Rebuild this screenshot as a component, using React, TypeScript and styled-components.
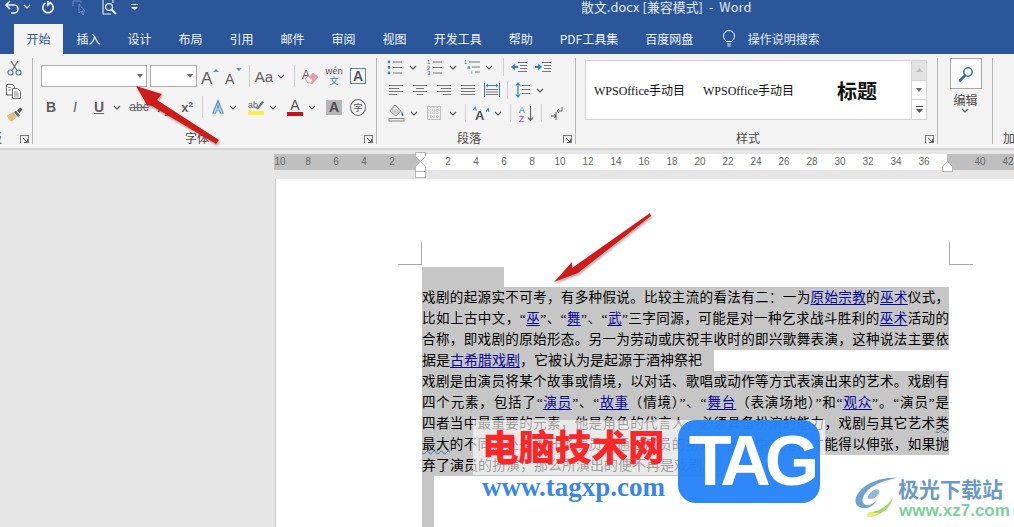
import React from "react";
import styled, { createGlobalStyle } from "styled-components";

const Global = createGlobalStyle`
  html, body { margin: 0; padding: 0; overflow: hidden; background: #e6e6e6; }
  body { font-family: "Noto Sans CJK SC", "Liberation Sans", sans-serif; }
`;

const Screen = styled.div`
  position: relative; width: 1014px; height: 527px; overflow: hidden; background: #e6e6e6;
`;
const TitleBar = styled.div`
  display: flex; height: 24px; background: #2b579a; overflow: hidden;
`;
const QuickBar = styled.div`
  width: 581px; display: flex; align-items: flex-start; padding-left: 4px; box-sizing: border-box; flex: none;
`;
const QuickIcon = styled.svg<{ $ml?: number; $mt?: number }>`
  flex: none; margin-left: ${p => p.$ml ?? 0}px; margin-top: ${p => p.$mt ?? 0}px; display: block;
`;
const Title = styled.div`
  color: #e4eaf4; font-size: 12.8px; line-height: 14px; white-space: pre; letter-spacing: 0.1px;
`;
const TabBar = styled.div`
  display: flex; height: 30px; background: #2b579a; padding-left: 14px; align-items: stretch;
`;
const Tab = styled.div<{ $active?: boolean }>`
  padding: 0 ${p => (p.$active ? 12.5 : 13.5)}px; font-size: 12px; line-height: 29px;
  color: ${p => (p.$active ? "#2b579a" : "#f1f4f9")};
  background: ${p => (p.$active ? "#f3f3f3" : "transparent")};
  white-space: nowrap;
`;
const SearchTab = styled.div`
  font-size: 12px; line-height: 29px; color: #e4eaf4; white-space: nowrap;
`;
const Bulb = styled.svg`
  margin: 6px 12px 0 15px; flex: none;
`;
const Ribbon = styled.div`
  display: flex; height: 96px; box-sizing: border-box; padding-top: 4px; background: #f3f3f3;
  border-bottom: 2px solid #d4d4d4; overflow: hidden;
`;
const Group = styled.div<{ $w: number; $noBorder?: boolean }>`
  width: ${p => p.$w}px; height: 86px; box-sizing: border-box; flex: none;
  display: flex; flex-direction: column;
  border-right: ${p => (p.$noBorder ? "none" : "1px solid #b5b5b5")};
`;
const Rows = styled.div<{ $pt?: number; $gap: number }>`
  display: flex; flex-direction: column; gap: ${p => p.$gap}px; padding-top: ${p => p.$pt ?? 0}px; flex: 1;
`;
const Row = styled.div<{ $h: number }>`
  display: flex; align-items: center; height: ${p => p.$h}px;
`;
const Cell = styled.div<{ $w: number; $ml?: number }>`
  width: ${p => p.$w}px; margin-left: ${p => p.$ml ?? 0}px; flex: none; height: 100%;
  display: flex; align-items: center; justify-content: center; color: #5f5f5f; position: relative;
`;
const Sep = styled.div<{ $ml: number }>`
  width: 1px; height: 100%; margin-left: ${p => p.$ml}px; background: #cfcfcf; flex: none;
`;
const Combo = styled.div<{ $w: number; $ml?: number }>`
  width: ${p => p.$w}px; margin-left: ${p => p.$ml ?? 0}px; height: 22px; box-sizing: border-box; flex: none;
  border: 1px solid #ababab; background: #fff; display: flex; align-items: center; justify-content: flex-end; padding-right: 3px;
`;
const Glyph = styled.span<{ $size?: number; $weight?: number; $color?: string; $italic?: boolean; $under?: boolean; $strike?: boolean }>`
  font-family: "Liberation Sans", sans-serif;
  font-size: ${p => p.$size ?? 14}px; font-weight: ${p => p.$weight ?? 400};
  color: ${p => p.$color ?? "#5f5f5f"}; font-style: ${p => (p.$italic ? "italic" : "normal")};
  text-decoration: ${p => (p.$under ? "underline" : p.$strike ? "line-through" : "none")};
  line-height: 1; white-space: nowrap;
  sub, sup { font-size: 8px; color: #5f5f5f; line-height: 0; }
`;
const BoxedA = styled.span`
  width: 14px; height: 14px; border: 1px solid #5c87a8; display: flex; align-items: center; justify-content: center;
  font: 700 14px "Liberation Sans", sans-serif; color: #555; background: #fdfdfd;
`;
const GreyA = styled.span`
  width: 16px; height: 15px; background: #b5b5b5; display: flex; align-items: center; justify-content: center;
  font: 700 14px "Liberation Sans", sans-serif; color: #4d4d4d;
`;
const CircleChar = styled.span`
  width: 15px; height: 15px; border: 1px solid #666; border-radius: 50%; display: flex; align-items: center; justify-content: center;
  font-size: 9px; color: #555;
`;
const ColorBar = styled.div`
  display: flex; flex-direction: column; align-items: center; line-height: 1;
`;
const Swatch = styled.div<{ $c: string }>`
  width: 16px; height: 4px; background: ${p => p.$c}; margin-top: 0;
`;
const Wen = styled.div`
  display: flex; flex-direction: column; align-items: center; line-height: 10px; font-size: 9px; color: #555;
  b { font-weight: 400; color: #2b7cb8; }
`;
const LabelRow = styled.div`
  display: flex; height: 14px; align-items: center;
`;
const Label = styled.div<{ $ml: number }>`
  margin-left: ${p => p.$ml}px; margin-top: 2px; font-size: 12px; line-height: 14px; color: #4a4a4a; white-space: nowrap;
`;
const Launcher = styled.svg`
  margin-left: auto; margin-right: 3px; flex: none; margin-top: 5px;
`;
const Gallery = styled.div`
  margin: 2px 0 0 9px; width: 342px; height: 60px; box-sizing: border-box; border: 1px solid #d2d2d2; background: #fff;
  display: flex;
`;
const StyleItem = styled.div<{ $w: number; $pl: number }>`
  width: ${p => p.$w}px; padding-left: ${p => p.$pl}px; box-sizing: border-box; flex: none; display: flex; align-items: center;
  font: 12px "Liberation Serif", "Noto Sans CJK SC", serif; color: #111; white-space: nowrap; overflow: hidden;
`;
const BigStyle = styled.span`
  font: 700 20px "Noto Sans CJK SC", serif; color: #111;
`;
const Scroller = styled.div`
  margin-left: auto; width: 15px; display: flex; flex-direction: column; border-left: 1px solid #d2d2d2;
`;
const ScrollBtn = styled.div<{ $top?: boolean }>`
  flex: 1; display: flex; align-items: center; justify-content: center;
  background: ${p => (p.$top ? "#e3e3e3" : "#fff")}; border-bottom: 1px solid #d2d2d2;
  &:last-child { border-bottom: 0; }
`;
const EditCol = styled.div`
  display: flex; flex-direction: column; align-items: center; flex: 1;
`;
const EditBtn = styled.div`
  width: 32px; height: 31px; box-sizing: border-box; border: 1px solid #a8a8a8; background: #fbfbfb;
  display: flex; align-items: center; justify-content: center; margin-left: 1px;
`;
const EditText = styled.div`
  font-size: 12px; line-height: 16px; color: #4a4a4a; margin-top: 3px; margin-left: 1px;
`;
const Stack = styled.div`
  display: flex; flex-direction: column; align-items: center; width: 28px; gap: 5px; padding-top: 1px;
`;
const ClipIcon = styled.div`
  height: 18px; display: flex; align-items: center; justify-content: center;
`;
const Work = styled.div`
  height: 377px; overflow: hidden;
`;
const Ruler = styled.div`
  margin: 4px 0 0 274px; height: 16px; display: flex; overflow: hidden; position: relative;
  background: linear-gradient(to right, #bfbfbf 146px, #fff 146px, #fff 673px, #bfbfbf 673px);
`;
const Ticks = styled.div`
  display: flex; margin-left: -8px;
`;
const Tick = styled.span`
  width: 28px; flex: none; text-align: center; font: 10px/16px "Liberation Sans", sans-serif; color: #666;
`;
const Marker = styled.svg<{ $x: number }>`
  position: absolute; left: ${p => p.$x}px; top: 150px;
`;
const Page = styled.div`
  position: relative; margin: 9px 0 0 275px; width: 820px; height: 360px; box-sizing: border-box;
  background: #fff; border-left: 1px solid #cfcfcf; padding: 88px 0 0 146px;
`;
const Crop = styled.div<{ $x: number; $right?: boolean }>`
  position: absolute; left: ${p => p.$x}px; top: 63px; width: 24px; height: 23px; box-sizing: border-box;
  border-bottom: 1px solid #a8a8a8;
  ${p => (p.$right ? "border-left: 1px solid #a8a8a8;" : "border-right: 1px solid #a8a8a8;")}
`;
const Selected = styled.div`
  width: 82px; height: 20px; background: #c6c6c6;
`;
const Line = styled.div<{ $w?: number }>`
  width: ${p => p.$w ?? 527}px; height: 21px; background: #c6c6c6; overflow: hidden; color: #000;
  font: ${p => (p.$w ? 14 : 13.5)}px/21px "Liberation Serif", "Noto Sans CJK SC", sans-serif; white-space: nowrap;
  ${p => (p.$w ? "" : "text-align: justify; text-align-last: justify; white-space: normal;")}
`;
const Strip = styled.div`
  width: 12px; height: 60px; background: #c6c6c6;
`;
const Link = styled.a`
  color: #06069c; text-decoration: underline; text-underline-offset: 2px;
`;
const Squiggle = styled.span`
  text-decoration: underline wavy #3a5fb0 1px;
`;
const Veil = styled.div`
  position: absolute; left: 473px; top: 420px; width: 352px; height: 55px; background: rgba(255, 255, 255, 0.62);
`;
const WmTitle = styled.div`
  position: absolute; left: 482px; top: 420px; font-size: 36.5px; line-height: 52px; font-weight: 900; color: #f9262a; white-space: nowrap;
`;
const WmUrl = styled.div`
  position: absolute; left: 482px; top: 471px; font: 700 27px/32px "Liberation Serif", serif; color: #3a86e8; white-space: nowrap;
`;
const TagBox = styled.div`
  position: absolute; left: 678px; top: 420px; width: 142px; height: 83px; box-sizing: border-box; padding-left: 4px; border-radius: 18px;
  background: rgba(31, 127, 246, 0.93); display: flex; align-items: center; justify-content: center;
  font: 700 70px/83px "Liberation Sans", sans-serif; color: #fff; letter-spacing: -6px;
`;
const LogoMark = styled.svg`
  position: absolute; left: 853px; top: 476px;
`;
const LogoName = styled.div`
  position: absolute; left: 898px; top: 474px; font-size: 21px; line-height: 28px; font-weight: 700; color: #6c9ac6; white-space: nowrap;
`;
const LogoUrl = styled.div`
  position: absolute; left: 899px; top: 501px; font: 700 17px/20px "Liberation Sans", sans-serif; color: #7ccf9e; white-space: nowrap;
`;
const ArrowLayer = styled.svg`
  position: absolute; left: 0; top: 0;
`;

const Caret = ({ c = "#555" }: { c?: string }) => (
  <svg width="8" height="5" viewBox="0 0 8 5"><path d="M1 1l3 3 3-3" fill="none" stroke={c} strokeWidth="1.2" /></svg>
);
const DownTri = () => (
  <svg width="6" height="4" viewBox="0 0 6 4"><path d="M0 0h6L3 4z" fill="#666" /></svg>
);
const Launch = () => (
  <Launcher width="9" height="9" viewBox="0 0 9 9">
    <path d="M.5 8V.5H8.500V8" fill="none" stroke="#777" /><path d="M3 3l4 4M7.500 4v3.500H4" fill="none" stroke="#555" />
  </Launcher>
);
const Grow = ({ up }: { up?: boolean }) => (
  <svg width="20" height="18" viewBox="0 0 20 18">
    <text x="1" y="17" fontFamily="Liberation Sans" fontSize={up ? 17 : 14} fill="#5f5f5f">A</text>
    <path d={up ? "M13 5l3-3 3 3z" : "M12 1h6l-3 3z"} fill="#5b93c8" />
  </svg>
);
const Lines = ({ kind }: { kind: "left" | "center" | "right" | "just" }) => {
  const rows = [1.5, 4.5, 7.5, 10.5];
  const spans: Record<string, [number, number][]> = {
    left: [[1, 15], [1, 11], [1, 15], [1, 9]],
    center: [[1, 15], [4, 12], [1, 15], [5, 11]],
    right: [[1, 15], [5, 15], [1, 15], [7, 15]],
    just: [[1, 15], [1, 15], [1, 15], [1, 15]],
  };
  return (
    <svg width="16" height="12" viewBox="0 0 16 12">
      {rows.map((y, i) => <path key={y} d={`M${spans[kind][i][0]} ${y}H${spans[kind][i][1]}`} stroke="#777" />)}
    </svg>
  );
};
const Bullets = () => (
  <svg width="16" height="15" viewBox="0 0 16 15">
    {[2, 7.5, 13].map(y => <React.Fragment key={y}><circle cx="2" cy={y} r="1.4" fill="#4a7fb0" /><path d={`M6 ${y}H15`} stroke="#777" /></React.Fragment>)}
  </svg>
);
const Numbers = () => (
  <svg width="16" height="16" viewBox="0 0 16 16">
    {["1", "2", "3"].map((n, i) => <React.Fragment key={n}><text x="0" y={5 + i * 5.5} fontSize="6" fontFamily="Liberation Sans" fill="#3b6f9e">{n}</text><path d={`M6 ${3 + i * 5.5}H15`} stroke="#777" /></React.Fragment>)}
  </svg>
);
const Multi = () => (
  <svg width="18" height="16" viewBox="0 0 18 16">
    <text x="0" y="5" fontSize="5.5" fontFamily="Liberation Sans" fill="#3b6f9e">1</text><path d="M5 3H16" stroke="#777" />
    <text x="3" y="10" fontSize="5.5" fontFamily="Liberation Sans" fill="#3b6f9e">a</text><path d="M8 8H16" stroke="#777" />
    <text x="7" y="15" fontSize="5.5" fontFamily="Liberation Sans" fill="#777">i</text><path d="M11 13H16" stroke="#777" />
  </svg>
);
const Indent = ({ out }: { out?: boolean }) => (
  <svg width="17" height="13" viewBox="0 0 17 13">
    <path d="M7 1.500H16M9 4.500H16M9 7.500H16M7 10.500H16" stroke="#777" />
    {out ? <path d="M0 6l4-3.500V5h3v2H4v2.500z" fill="#2f7fc4" /> : <path d="M7 6L3 2.500V5H0v2h3v2.500z" fill="#2f7fc4" />}
  </svg>
);
const Distribute = () => (
  <svg width="16" height="16" viewBox="0 0 16 16">
    <path d="M.5 1v14M15.500 1v14" stroke="#2f7fc4" /><path d="M2 3.500h12M4 2l-2 1.500L4 5M12 2l2 1.500L12 5" fill="none" stroke="#2f7fc4" />
    <path d="M2 7.500H14M2 10H14M2 12.500H14" stroke="#777" />
  </svg>
);
const Spacing = () => (
  <svg width="16" height="16" viewBox="0 0 16 16">
    <path d="M3 1v14M1 3.500L3 1l2 2.500M1 12.500L3 15l2-2.500" fill="none" stroke="#2f7fc4" strokeWidth="1.2" />
    <path d="M7 3.500H15M7 7.500H15M7 11.500H15" stroke="#777" />
  </svg>
);
const Shade = () => (
  <svg width="17" height="18" viewBox="0 0 17 18">
    <path d="M7 1l6 6-5 5-6-5z" fill="#fbfbfb" stroke="#666" />
    <path d="M13 7c2 2 3 4 2.200 5-1 1-2-1-2.200-5z" fill="#2f7fc4" />
    <path d="M4 5h7l2 2-5 5-6-5z" fill="#cfcfcf" />
    <rect x="1" y="14.500" width="15" height="2.500" fill="#efefef" stroke="#888" />
  </svg>
);
const Borders = () => (
  <svg width="14" height="14" viewBox="0 0 14 14">
    <rect x=".5" y=".5" width="13" height="13" fill="none" stroke="#8a8a8a" strokeDasharray="1 1" />
    <path d="M7 1v12M1 7h12M3.800 1v12M10.200 1v12M1 3.800h12M1 10.200h12" stroke="#bdbdbd" strokeDasharray="1 1" />
  </svg>
);
const TextDir = () => (
  <svg width="18" height="14" viewBox="0 0 18 14">
    <text x="3" y="13.500" fontFamily="Liberation Sans" fontWeight="700" fontSize="13" fill="#555">A</text>
    <path d="M1 5l2-3 1.500 3M14 5l2-3 1 3" fill="none" stroke="#2f7fc4" strokeWidth="1.2" transform="rotate(6 9 4)" />
  </svg>
);
const Sort = () => (
  <svg width="16" height="17" viewBox="0 0 16 17">
    <text x="0" y="8" fontFamily="Liberation Sans" fontSize="8.5" fill="#2f7fc4">A</text>
    <text x="0" y="16.500" fontFamily="Liberation Sans" fontSize="8.5" fill="#8a4fa8">Z</text>
    <path d="M11.500 1v14M9 12.500l2.500 3 2.500-3" fill="none" stroke="#666" strokeWidth="1.2" />
  </svg>
);
const Pilcrow = () => (
  <svg width="12" height="14" viewBox="0 0 12 14">
    <path d="M11 1v4H6M8 3L6 5l2 2" fill="none" stroke="#666" />
    <path d="M0 10h5M3 8l2 2-2 2M5 6v8" fill="none" stroke="#555" />
  </svg>
);
const Scissors = () => (
  <svg width="15" height="16" viewBox="0 0 15 16">
    <circle cx="3.500" cy="12.500" r="2.500" fill="none" stroke="#5b7f9c" strokeWidth="1.2" />
    <circle cx="11.500" cy="12.500" r="2.500" fill="none" stroke="#5b7f9c" strokeWidth="1.2" />
    <path d="M5 10.500L11 1M10 10.500L4 1" stroke="#666" strokeWidth="1.2" />
  </svg>
);
const CopyIcon = () => (
  <svg width="16" height="15" viewBox="0 0 16 15">
    <path d="M.5.5h6l2 2V11H.5z" fill="#fff" stroke="#666" />
    <path d="M6.500 4.500h5l3 3v7h-8z" fill="#fff" stroke="#666" />
    <path d="M2 3.500h3M2 6h3M8 8h4M8 10h5M8 12h5" stroke="#888" />
  </svg>
);
const Brush = () => (
  <svg width="17" height="15" viewBox="0 0 17 15">
    <path d="M1 8.500L7.500 5l3.500 5-5 4.500c-2 0-4-3-5-6z" fill="#e0bd80" />
    <path d="M8 5l4 5 2-1.500-4-5z" fill="#6a6a6a" />
    <path d="M11 3.500L14.500 0.500 16.500 2.500 13.500 6z" fill="#555" />
  </svg>
);
const Eraser = () => (
  <svg width="17" height="17" viewBox="0 0 17 17">
    <text x="0" y="11" fontFamily="Liberation Sans" fontSize="12" fill="#5f5f5f">A</text>
    <path d="M5 12l6-7 5 4-6 7z" fill="#ef9aa6" stroke="#d97c8a" strokeWidth=".5" />
    <path d="M3 11l3-3 5 4-2 3H6z" fill="#f3f3f3" stroke="#ef9aa6" />
  </svg>
);
const Lens = () => (
  <svg width="16" height="16" viewBox="0 0 16 16">
    <circle cx="10" cy="6" r="4.200" fill="none" stroke="#2f7fb5" strokeWidth="1.6" />
    <path d="M7 9.500L2 14.500" stroke="#2f6f9f" strokeWidth="2.600" strokeLinecap="round" />
  </svg>
);
const AccentA = () => (
  <svg width="16" height="16" viewBox="0 0 16 16">
    <path d="M8 1.500L3 14h2.500l1-3h3l1 3H13zM7.200 9L8 6l.8 3z" fill="#f4f8fc" stroke="#4a90cf" strokeWidth="1.2" />
  </svg>
);
const HighlightPen = () => (
  <svg width="16" height="11" viewBox="0 0 16 11">
    <text x="0" y="8" fontFamily="Liberation Sans" fontSize="9" fill="#5f5f5f">ab</text>
    <path d="M8 9l6-8 2 1.500-6 7z" fill="#777" />
  </svg>
);

const ticks = ["10", "8", "6", "4", "2", "", "2", "4", "6", "8", "10", "12", "14", "16", "18", "20", "22", "24", "26", "28", "30", "32", "34", "36", "", "40", "42"];

export default function App() {
  return (
    <Screen>
      <Global />
      <TitleBar>
        <QuickBar>
          <QuickIcon width="16" height="14" viewBox="0 0 16 14">
            <path d="M6 1L2 5l4 4M2 5h8a4 4 0 0 1 0 8H7" fill="none" stroke="#eef2f8" strokeWidth="1.6" />
          </QuickIcon>
          <QuickIcon $ml={3} $mt={4} width="8" height="5" viewBox="0 0 8 5"><path d="M1 1l3 3 3-3" fill="none" stroke="#e4eaf4" strokeWidth="1.2" /></QuickIcon>
          <QuickIcon $ml={10} width="14" height="14" viewBox="0 0 14 14">
            <path d="M7 1v4l3-3M4.500 3a5.200 5.200 0 1 0 5 0" fill="none" stroke="#eef2f8" strokeWidth="1.7" />
          </QuickIcon>
          <QuickIcon $ml={17} width="16" height="16" viewBox="0 0 16 16">
            <path d="M1 6V1h8v2M7 4v9l2-2 2 4 1-1-2-3h3z" fill="none" stroke="#6f8dbb" />
          </QuickIcon>
          <QuickIcon $ml={14} width="16" height="16" viewBox="0 0 16 16">
            <path d="M1 0v14h8M11 0v3" fill="none" stroke="#eef2f8" strokeWidth="1.1" />
            <circle cx="7" cy="7" r="3.400" fill="none" stroke="#eef2f8" strokeWidth="1.2" />
            <path d="M9.500 9.500L14 14" stroke="#eef2f8" strokeWidth="1.8" />
          </QuickIcon>
          <QuickIcon $ml={13} $mt={4} width="7" height="7" viewBox="0 0 7 7">
            <path d="M0 .5h7" stroke="#e4eaf4" /><path d="M0 3h7L3.500 6.500z" fill="#e4eaf4" />
          </QuickIcon>
        </QuickBar>
        <Title>散文.docx [兼容模式]  -  Word</Title>
      </TitleBar>
      <TabBar>
        <Tab $active>开始</Tab>
        {["插入", "设计", "布局", "引用", "邮件", "审阅", "视图", "开发工具", "帮助", "PDF工具集", "百度网盘"].map(t => <Tab key={t}>{t}</Tab>)}
        <Bulb width="14" height="17" viewBox="0 0 14 17">
          <path d="M4.500 11.500C3 10 1.500 8.500 1.500 6a5.500 5.500 0 0 1 11 0c0 2.500-1.500 4-3 5.500z M5 14h4M5.500 16h3" fill="none" stroke="#eef2f8" />
        </Bulb>
        <SearchTab>操作说明搜索</SearchTab>
      </TabBar>
      <Ribbon>
        <Group $w={33}>
          <Rows $gap={0}>
            <Stack>
              <ClipIcon><Scissors /></ClipIcon>
              <ClipIcon><CopyIcon /></ClipIcon>
              <ClipIcon><Brush /></ClipIcon>
            </Stack>
          </Rows>
          <LabelRow><Label $ml={-10}>板</Label><Launch /></LabelRow>
        </Group>
        <Group $w={344}>
          <Rows $pt={7} $gap={9}>
            <Row $h={22}>
              <Combo $w={106} $ml={8}><DownTri /></Combo>
              <Combo $w={47} $ml={3}><DownTri /></Combo>
              <Cell $w={22} $ml={2}><Grow up /></Cell>
              <Cell $w={24} $ml={1}><Grow /></Cell>
              <Sep $ml={3} />
              <Cell $w={24} $ml={2}><Glyph $size={15}>Aa</Glyph></Cell>
              <Cell $w={10}><Caret /></Cell>
              <Sep $ml={8} />
              <Cell $w={22} $ml={4}><Eraser /></Cell>
              <Cell $w={24} $ml={1}><Wen>wén<b>文</b></Wen></Cell>
              <Cell $w={22} $ml={1}><BoxedA>A</BoxedA></Cell>
            </Row>
            <Row $h={22}>
              <Cell $w={20} $ml={8}><Glyph $weight={700} $size={14}>B</Glyph></Cell>
              <Cell $w={20} $ml={4}><Glyph $italic $size={14}>I</Glyph></Cell>
              <Cell $w={20} $ml={4}><Glyph $under $size={14} $weight={700}>U</Glyph></Cell>
              <Cell $w={14} $ml={1}><Caret /></Cell>
              <Cell $w={24} $ml={3}><Glyph $strike $size={12}>abc</Glyph></Cell>
              <Cell $w={24}><Glyph $weight={700} $size={13}>x<sub>2</sub></Glyph></Cell>
              <Cell $w={24}><Glyph $weight={700} $size={13}>x<sup>2</sup></Glyph></Cell>
              <Sep $ml={3} />
              <Cell $w={20} $ml={5}><AccentA /></Cell>
              <Cell $w={10}><Caret /></Cell>
              <Cell $w={20} $ml={8}><ColorBar><HighlightPen /><Swatch $c="#f7ee4a" /></ColorBar></Cell>
              <Cell $w={14}><Caret /></Cell>
              <Cell $w={20} $ml={5}><ColorBar><Glyph $size={14} $color="#555">A</Glyph><Swatch $c="#c8101a" /></ColorBar></Cell>
              <Cell $w={14}><Caret /></Cell>
              <Cell $w={20} $ml={5}><GreyA>A</GreyA></Cell>
              <Cell $w={16} $ml={6}><CircleChar>字</CircleChar></Cell>
            </Row>
          </Rows>
          <LabelRow><Label $ml={152}>字体</Label><Launch /></LabelRow>
        </Group>
        <Group $w={199}>
          <Rows $gap={5}>
            <Row $h={18}>
              <Cell $w={22} $ml={7}><Bullets /></Cell>
              <Cell $w={14}><Caret /></Cell>
              <Cell $w={22} $ml={4}><Numbers /></Cell>
              <Cell $w={14}><Caret /></Cell>
              <Cell $w={20} $ml={3}><Multi /></Cell>
              <Cell $w={12}><Caret /></Cell>
              <Sep $ml={8} />
              <Cell $w={22} $ml={4}><Indent out /></Cell>
              <Cell $w={24} $ml={1}><Indent /></Cell>
            </Row>
            <Row $h={18}>
              <Cell $w={24} $ml={7}><Lines kind="left" /></Cell>
              <Cell $w={24}><Lines kind="center" /></Cell>
              <Cell $w={24}><Lines kind="right" /></Cell>
              <Cell $w={24}><Lines kind="just" /></Cell>
              <Cell $w={20} $ml={2}><Distribute /></Cell>
              <Sep $ml={5} />
              <Cell $w={22} $ml={4}><Spacing /></Cell>
              <Cell $w={12}><Caret /></Cell>
            </Row>
            <Row $h={18}>
              <Cell $w={22} $ml={8}><Shade /></Cell>
              <Cell $w={14}><Caret /></Cell>
              <Cell $w={22} $ml={2}><Borders /></Cell>
              <Cell $w={14} $ml={1}><Caret /></Cell>
              <Sep $ml={5} />
              <Cell $w={24} $ml={3}><TextDir /></Cell>
              <Cell $w={10}><Caret /></Cell>
              <Sep $ml={7} />
              <Cell $w={24} $ml={4}><Sort /></Cell>
              <Sep $ml={2} />
              <Cell $w={24} $ml={3}><Pilcrow /></Cell>
            </Row>
          </Rows>
          <LabelRow><Label $ml={80}>段落</Label><Launch /></LabelRow>
        </Group>
        <Group $w={362}>
          <Gallery>
            <StyleItem $w={117} $pl={8}>WPSOffice手动目</StyleItem>
            <StyleItem $w={108} $pl={0}>WPSOffice手动目</StyleItem>
            <StyleItem $w={100} $pl={26}><BigStyle>标题</BigStyle></StyleItem>
            <Scroller>
              <ScrollBtn $top><svg width="7" height="4" viewBox="0 0 7 4"><path d="M0 4h7L3.500 0z" fill="#bbb" /></svg></ScrollBtn>
              <ScrollBtn><DownTri /></ScrollBtn>
              <ScrollBtn>
                <svg width="7" height="7" viewBox="0 0 7 7"><path d="M0 .5h7" stroke="#555" /><path d="M0 3h7L3.500 7z" fill="#555" /></svg>
              </ScrollBtn>
            </Scroller>
          </Gallery>
          <Rows $gap={0} />
          <LabelRow><Label $ml={160}>样式</Label><Launch /></LabelRow>
        </Group>
        <Group $w={55}>
          <EditCol>
            <EditBtn><Lens /></EditBtn>
            <EditText>编辑</EditText>
            <Caret />
          </EditCol>
        </Group>
        <Group $w={30} $noBorder>
          <Rows $gap={0} />
          <LabelRow><Label $ml={10}>加载项</Label></LabelRow>
        </Group>
      </Ribbon>
      <Work>
        <Ruler>
          <Ticks>{ticks.map((t, i) => <Tick key={i}>{t}</Tick>)}</Ticks>
        </Ruler>
        <Page>
          <Crop $x={122} />
          <Crop $x={673} $right />
          <Selected />
          <Line>戏剧的起源实不可考，有多种假说。比较主流的看法有二：一为<Link>原始宗教</Link>的<Link>巫术</Link>仪式，</Line>
          <Line>比如上古中文，“<Link>巫</Link>”、“<Link>舞</Link>”、“<Link>武</Link>”三字同源，可能是对一种乞求战斗胜利的<Link>巫术</Link>活动的</Line>
          <Line>合称，即戏剧的原始形态。另一为劳动或庆祝丰收时的即兴歌舞表演，这种说法主要依</Line>
          <Line $w={292}>据是<Link>古希腊戏剧</Link>，它被认为是起源于酒神祭祀</Line>
          <Line>戏剧是由演员将某个故事或情境，以对话、歌唱或动作等方式表演出来的艺术。戏剧有</Line>
          <Line>四个元素，包括了“<Link>演员</Link>”、“<Link>故事</Link>（情境）”、“<Link>舞台</Link>（表演场地）”和“<Link>观众</Link>”。“演员”是</Line>
          <Line>四者当中最重要的元素，他是角色的代言人，必须具备扮演的能力，戏剧与其它艺术<Squiggle>类</Squiggle></Line>
          <Line><Squiggle>最大</Squiggle>的不同之处是离开了演员，通过演员的扮演，剧本中的角色才能得以伸张，如果抛</Line>
          <Line $w={300}>弃了演员的扮演，那么所演出的便不再是戏剧。</Line>
          <Strip />
        </Page>
      </Work>
      <Marker $x={415} width="11" height="29" viewBox="0 0 11 29">
        <path d="M.5 2.500h10v4l-5 5-5-5z" fill="#fff" stroke="#b5b5b5" />
        <path d="M.5 16.500l5-5 5 5v5H.5z" fill="#fff" stroke="#b5b5b5" />
        <rect x=".5" y="21.500" width="10" height="6" fill="#fff" stroke="#b5b5b5" />
      </Marker>
      <Marker $x={942} width="11" height="23" viewBox="0 0 11 23">
        <path d="M.5 21.500v-5l5-5 5 5v5z" fill="#fff" stroke="#b5b5b5" />
      </Marker>
      <Veil />
      <WmTitle>电脑技术网</WmTitle>
      <WmUrl>www.tagxp.com</WmUrl>
      <TagBox>TAG</TagBox>
      <LogoMark width="48" height="42" viewBox="0 0 48 42">
        <path d="M44 2C30 1 14 6 6 16 0 23 2 31 9 32c6 1 12-2 14-7-4 4-9 5-12 3-3-3-1-9 4-14C22 8 33 4 44 2z" fill="#6ea3cf" />
        <path d="M24 13c-6 2-10 6-9 9 1 2 6 1 9-2 3-3 3-6 0-7z" fill="#8fb9d6" />
        <path d="M14 41c12 0 24-8 26-20-5 9-13 14-22 15-3 0-4 3-4 5z" fill="#a5d66a" />
        <path d="M14 41c5 0 10-2 14-4-4 0-8 0-10-1-3 0-4 3-4 5z" fill="#ecec70" />
      </LogoMark>
      <LogoName>极光下载站</LogoName>
      <LogoUrl>www.xz7.com</LogoUrl>
      <ArrowLayer width="1014" height="527" viewBox="0 0 1014 527">
        <defs>
          <filter id="sh" x="-20%" y="-20%" width="140%" height="140%"><feDropShadow dx="1" dy="2" stdDeviation="1.2" floodColor="#000" floodOpacity=".3" /></filter>
        </defs>
        <path d="M136 86L162 94 157 100 219 140 216 144 152 106 147 105z" fill="#cc1f1a" filter="url(#sh)" />
        <path d="M554 282L572 262 572 268 650 213 651 216 578 273z" fill="#cc1f1a" filter="url(#sh)" />
      </ArrowLayer>
    </Screen>
  );
}
